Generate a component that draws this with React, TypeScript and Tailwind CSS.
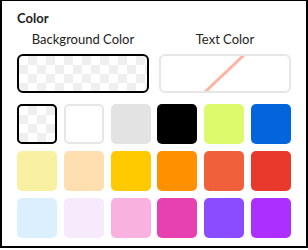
const swatches: { color: string; kind?: 'transparent' | 'white' }[] = [
  { color: 'transparent', kind: 'transparent' },
  { color: '#ffffff', kind: 'white' },
  { color: '#e3e3e3' },
  { color: '#000000' },
  { color: '#ddf96c' },
  { color: '#0265dc' },
  { color: '#f9f0a1' },
  { color: '#ffdfb0' },
  { color: '#ffcb00' },
  { color: '#ff9000' },
  { color: '#f0603a' },
  { color: '#e9392c' },
  { color: '#dcefff' },
  { color: '#f7eafd' },
  { color: '#f9b2df' },
  { color: '#e740b0' },
  { color: '#8b4bff' },
  { color: '#ad2fff' },
];

const checker =
  'bg-[conic-gradient(#efefef_25%,#ffffff_0_50%,#efefef_0_75%,#ffffff_0)] bg-[length:18px_18px]';

function Swatch({ color, kind }: { color: string; kind?: 'transparent' | 'white' }) {
  if (kind === 'transparent') {
    return <div className={`aspect-square rounded-[5px] border-2 border-black ${checker}`} />;
  }
  if (kind === 'white') {
    return <div className="aspect-square rounded-[5px] border-2 border-[#e6e6e6] bg-white" />;
  }
  return <div className="aspect-square rounded-[5px]" style={{ backgroundColor: color }} />;
}

export default function App() {
  return (
    <div className="w-[308px] h-[250px] bg-white font-['Lato',sans-serif] text-[#222]">
      <div className="h-[248px] border-2 border-t border-black px-[15px] pt-[9px]">
        <div className="text-[13px] font-bold leading-[16px]">Color</div>

        <div className="mt-[5px] grid grid-cols-2 gap-[10px]">
          <div className="flex flex-col items-center">
            <span className="text-[13px] leading-[16px]">Background Color</span>
            <div className={`mt-[7px] h-[39px] w-full rounded-[6px] border-2 border-black ${checker}`} />
          </div>
          <div className="flex flex-col items-center">
            <span className="text-[13px] leading-[16px]">Text Color</span>
            <div className="relative mt-[7px] h-[39px] w-full rounded-[6px] border-2 border-[#e6e6e6] bg-white">
              <svg className="absolute inset-0" width="128" height="35" viewBox="0 0 128 35">
                <line x1="44" y1="36" x2="83" y2="-1" stroke="#ffb4a2" strokeWidth="3" />
              </svg>
            </div>
          </div>
        </div>

        <div className="mt-[11px] grid grid-cols-6 gap-x-[6.6px] gap-y-[6.6px]">
          {swatches.map((s, i) => (
            <Swatch key={i} color={s.color} kind={s.kind} />
          ))}
        </div>
      </div>
    </div>
  );
}
